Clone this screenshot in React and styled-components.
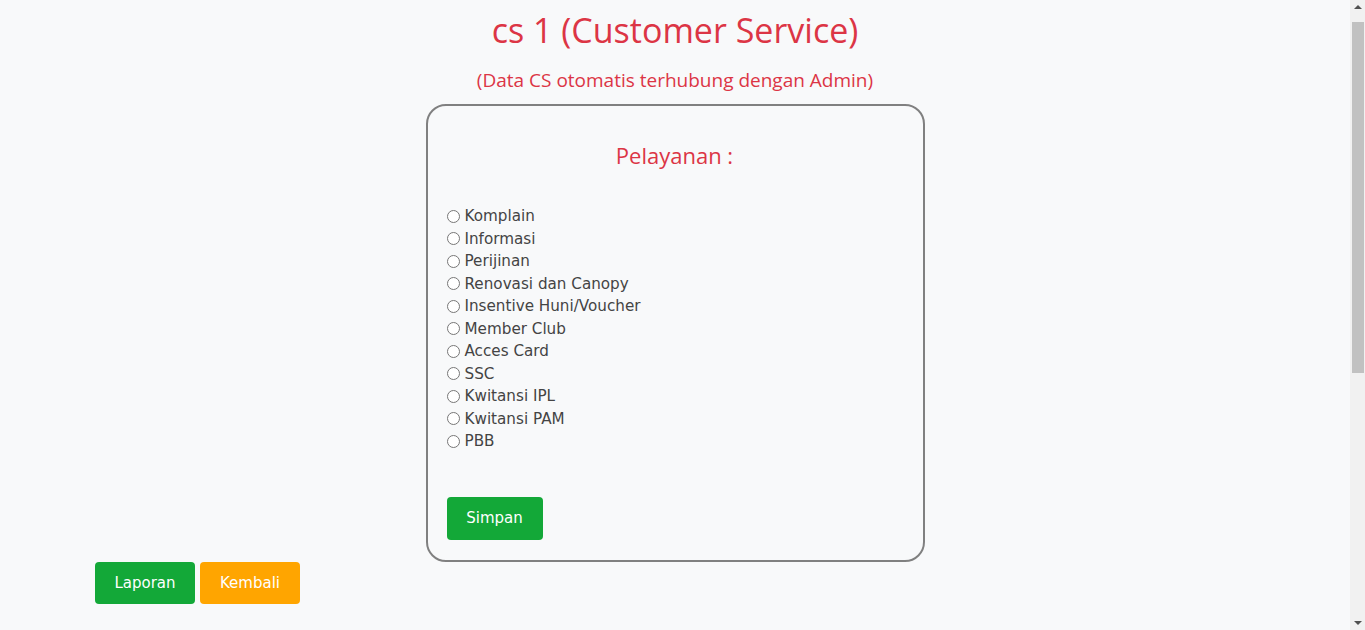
import { useState } from 'react';
import styled, { createGlobalStyle } from 'styled-components';

const GlobalStyle = createGlobalStyle`
  html, body {
    margin: 0;
    padding: 0;
    background: #f8f9fa;
  }
  body {
    font-family: "DejaVu Sans", Verdana, sans-serif;
  }
  * { box-sizing: border-box; }
`;

const Page = styled.div`
  min-height: 1050px;
  padding: 8px 15px 0 0;
`;

const Title = styled.h1`
  margin: 0;
  text-align: center;
  color: #dc3545;
  font-family: "Open Sans", "Noto Sans", sans-serif;
  font-weight: 400;
  font-size: 34px;
  line-height: 44px;
`;

const Subtitle = styled.p`
  margin: 16px 0 0;
  text-align: center;
  color: #dc3545;
  font-family: "Open Sans", "Noto Sans", sans-serif;
  font-size: 19px;
  line-height: 24px;
`;

const Card = styled.form`
  width: 499px;
  margin: 12px auto 0;
  border: 2px solid #808080;
  border-radius: 20px;
  padding: 35px 20px 20px 19px;
  display: flex;
  flex-direction: column;
  align-items: flex-start;
`;

const CardTitle = styled.h3`
  align-self: stretch;
  margin: 0;
  text-align: center;
  color: #dc3545;
  font-family: "Open Sans", "Noto Sans", sans-serif;
  font-weight: 400;
  font-size: 22px;
  line-height: 29px;
`;

const OptionList = styled.div`
  margin-top: 35px;
  display: flex;
  flex-direction: column;
`;

const Option = styled.label`
  display: flex;
  align-items: center;
  height: 22.5px;
  font-size: 15.2px;
  color: #444;
  cursor: pointer;

  input {
    margin: 0 5px 0 0;
    width: 13px;
    height: 13px;
  }
`;

const Button = styled.button`
  border: none;
  border-radius: 4px;
  color: #fff;
  font-family: "DejaVu Sans", Verdana, sans-serif;
  font-size: 15px;
  cursor: pointer;
  background: ${(p) => (p.$variant === 'warning' ? '#ffa500' : '#13a838')};
  width: ${(p) => p.$w}px;
  height: ${(p) => p.$h}px;
  padding: 0;
`;

const SaveButton = styled(Button)`
  margin-top: 44px;
`;

const Footer = styled.div`
  display: flex;
  gap: 5px;
  margin: 0 0 0 95px;
`;

/* fake browser scrollbar, the reference page is taller than the window */
const ScrollTrack = styled.div`
  position: fixed;
  top: 0;
  right: 0;
  width: 15px;
  height: 100vh;
  background: #f1f1f1;
`;

const ScrollThumb = styled.div`
  position: absolute;
  left: 2px;
  right: 1px;
  top: 22px;
  height: 351px;
  background: #c1c1c1;
`;

const ScrollArrow = styled.div`
  position: absolute;
  left: 4px;
  width: 0;
  height: 0;
  border-left: 4px solid transparent;
  border-right: 4px solid transparent;
  ${(p) =>
    p.$down
      ? 'bottom: 5px; border-top: 4px solid #505050;'
      : 'top: 5px; border-bottom: 4px solid #505050;'}
`;

const options = [
  'Komplain',
  'Informasi',
  'Perijinan',
  'Renovasi dan Canopy',
  'Insentive Huni/Voucher',
  'Member Club',
  'Acces Card',
  'SSC',
  'Kwitansi IPL',
  'Kwitansi PAM',
  'PBB',
];

const App = () => {
  const [layanan, setLayanan] = useState('');

  return (
    <>
      <GlobalStyle />
      <Page>
        <Title>cs 1 (Customer Service)</Title>
        <Subtitle>(Data CS otomatis terhubung dengan Admin)</Subtitle>
        <Card onSubmit={(e) => e.preventDefault()}>
          <CardTitle>Pelayanan :</CardTitle>
          <OptionList>
            {options.map((o) => (
              <Option key={o}>
                <input
                  type='radio'
                  name='layanan'
                  value={o}
                  checked={layanan === o}
                  onChange={() => setLayanan(o)}
                />
                {o}
              </Option>
            ))}
          </OptionList>
          <SaveButton type='submit' $w={96} $h={43}>Simpan</SaveButton>
        </Card>
        <Footer>
          <Button type='button' $w={100} $h={42}>Laporan</Button>
          <Button type='button' $variant='warning' $w={100} $h={42}>Kembali</Button>
        </Footer>
      </Page>
      <ScrollTrack>
        <ScrollArrow />
        <ScrollThumb />
        <ScrollArrow $down />
      </ScrollTrack>
    </>
  );
};

export default App;
